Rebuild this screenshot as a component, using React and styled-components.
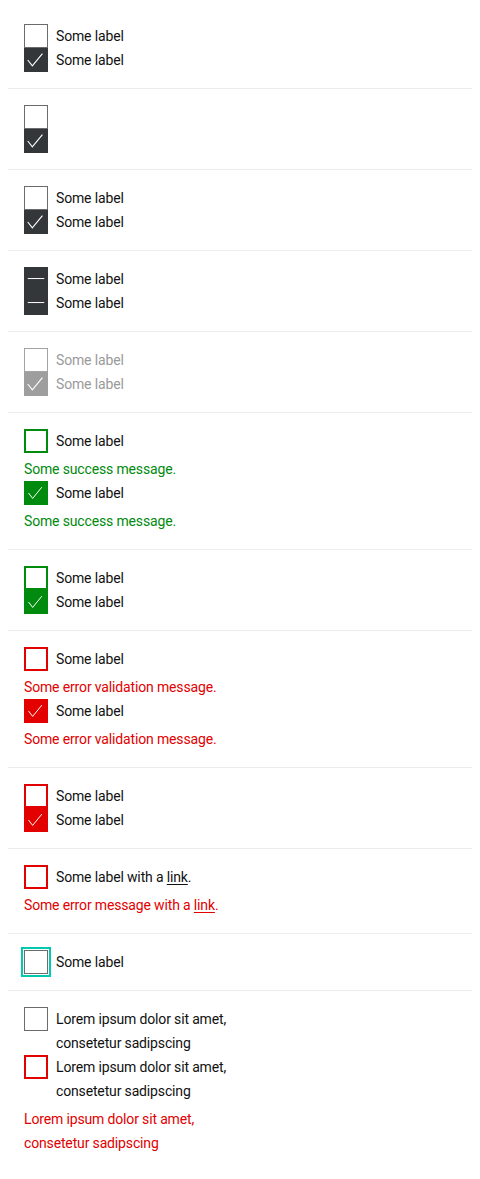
import React from 'react';
import styled, { createGlobalStyle, css } from 'styled-components';

const Global = createGlobalStyle`
  body {
    margin: 8px;
    background: #fff;
    font-family: Roboto, "Liberation Sans", sans-serif;
    color: #111;
  }
`;

const tones = {
  default: { border: '#6b6b6b', fill: '#33373a', width: 1 },
  disabled: { border: '#a3a3a3', fill: '#9e9e9e', width: 1 },
  success: { border: '#008a0e', fill: '#008a0e', width: 2 },
  error: { border: '#e20000', fill: '#e20000', width: 2 },
};

const Section = styled.div`
  padding: 16px;
  border-bottom: 1px solid #ececec;
  &:last-child {
    border-bottom: none;
  }
`;

const Row = styled.label`
  display: flex;
  align-items: flex-start;
  gap: 8px;
`;

const Box = styled.span`
  flex: none;
  box-sizing: border-box;
  width: 24px;
  height: 24px;
  display: flex;
  align-items: center;
  justify-content: center;
  background: ${(p) => (p.$checked ? tones[p.$tone].fill : '#fff')};
  border: ${(p) => tones[p.$tone].width}px solid
    ${(p) => (p.$checked ? tones[p.$tone].fill : tones[p.$tone].border)};
  ${(p) =>
    p.$focus &&
    css`
      outline: 2px solid #00c9b0;
      outline-offset: 1px;
    `}
  svg {
    display: block;
  }
`;

const Label = styled.span`
  font-size: 14px;
  line-height: 24px;
  letter-spacing: -0.15px;
  color: ${(p) => (p.$disabled ? '#9a9a9a' : '#111')};
  max-width: ${(p) => (p.$narrow ? '200px' : 'none')};
`;

const Message = styled.div`
  margin-top: 4px;
  font-size: 14px;
  line-height: 24px;
  letter-spacing: -0.15px;
  color: ${(p) => (p.$tone === 'success' ? '#008a0e' : '#e20000')};
  max-width: ${(p) => (p.$narrow ? '200px' : 'none')};
`;

const Link = styled.a`
  color: inherit;
  text-decoration: underline;
  text-underline-offset: 2px;
`;

const Mark = ({ indeterminate }) => (
  <svg width="24" height="24" viewBox="0 0 24 24" fill="none">
    {indeterminate ? (
      <path d="M3 11.5H21" stroke="#fff" strokeWidth="1.1" />
    ) : (
      <path d="M3 12L8 18.5L19 5" stroke="#fff" strokeWidth="1.2" />
    )}
  </svg>
);

const Checkbox = ({ tone = 'default', checked, indeterminate, focus, label, narrow, children }) => (
  <Row>
    <Box $tone={tone} $checked={checked || indeterminate} $focus={focus}>
      {(checked || indeterminate) && <Mark indeterminate={indeterminate} />}
    </Box>
    {(label || children) && (
      <Label $disabled={tone === 'disabled'} $narrow={narrow}>
        {label || children}
      </Label>
    )}
  </Row>
);

const lorem = 'Lorem ipsum dolor sit amet, consetetur sadipscing';

export default function App() {
  return (
    <>
      <Global />
      <Section>
        <Checkbox label="Some label" />
        <Checkbox label="Some label" checked />
      </Section>
      <Section>
        <Checkbox />
        <Checkbox checked />
      </Section>
      <Section>
        <Checkbox label="Some label" />
        <Checkbox label="Some label" checked />
      </Section>
      <Section>
        <Checkbox label="Some label" indeterminate />
        <Checkbox label="Some label" indeterminate />
      </Section>
      <Section>
        <Checkbox tone="disabled" label="Some label" />
        <Checkbox tone="disabled" label="Some label" checked />
      </Section>
      <Section>
        <Checkbox tone="success" label="Some label" />
        <Message $tone="success">Some success message.</Message>
        <Checkbox tone="success" label="Some label" checked />
        <Message $tone="success">Some success message.</Message>
      </Section>
      <Section>
        <Checkbox tone="success" label="Some label" />
        <Checkbox tone="success" label="Some label" checked />
      </Section>
      <Section>
        <Checkbox tone="error" label="Some label" />
        <Message $tone="error">Some error validation message.</Message>
        <Checkbox tone="error" label="Some label" checked />
        <Message $tone="error">Some error validation message.</Message>
      </Section>
      <Section>
        <Checkbox tone="error" label="Some label" />
        <Checkbox tone="error" label="Some label" checked />
      </Section>
      <Section>
        <Checkbox tone="error">
          Some label with a <Link>link</Link>.
        </Checkbox>
        <Message $tone="error">
          Some error message with a <Link>link</Link>.
        </Message>
      </Section>
      <Section>
        <Checkbox label="Some label" focus />
      </Section>
      <Section>
        <Checkbox label={lorem} narrow />
        <Checkbox tone="error" label={lorem} narrow />
        <Message $tone="error" $narrow>
          {lorem}
        </Message>
      </Section>
    </>
  );
}
